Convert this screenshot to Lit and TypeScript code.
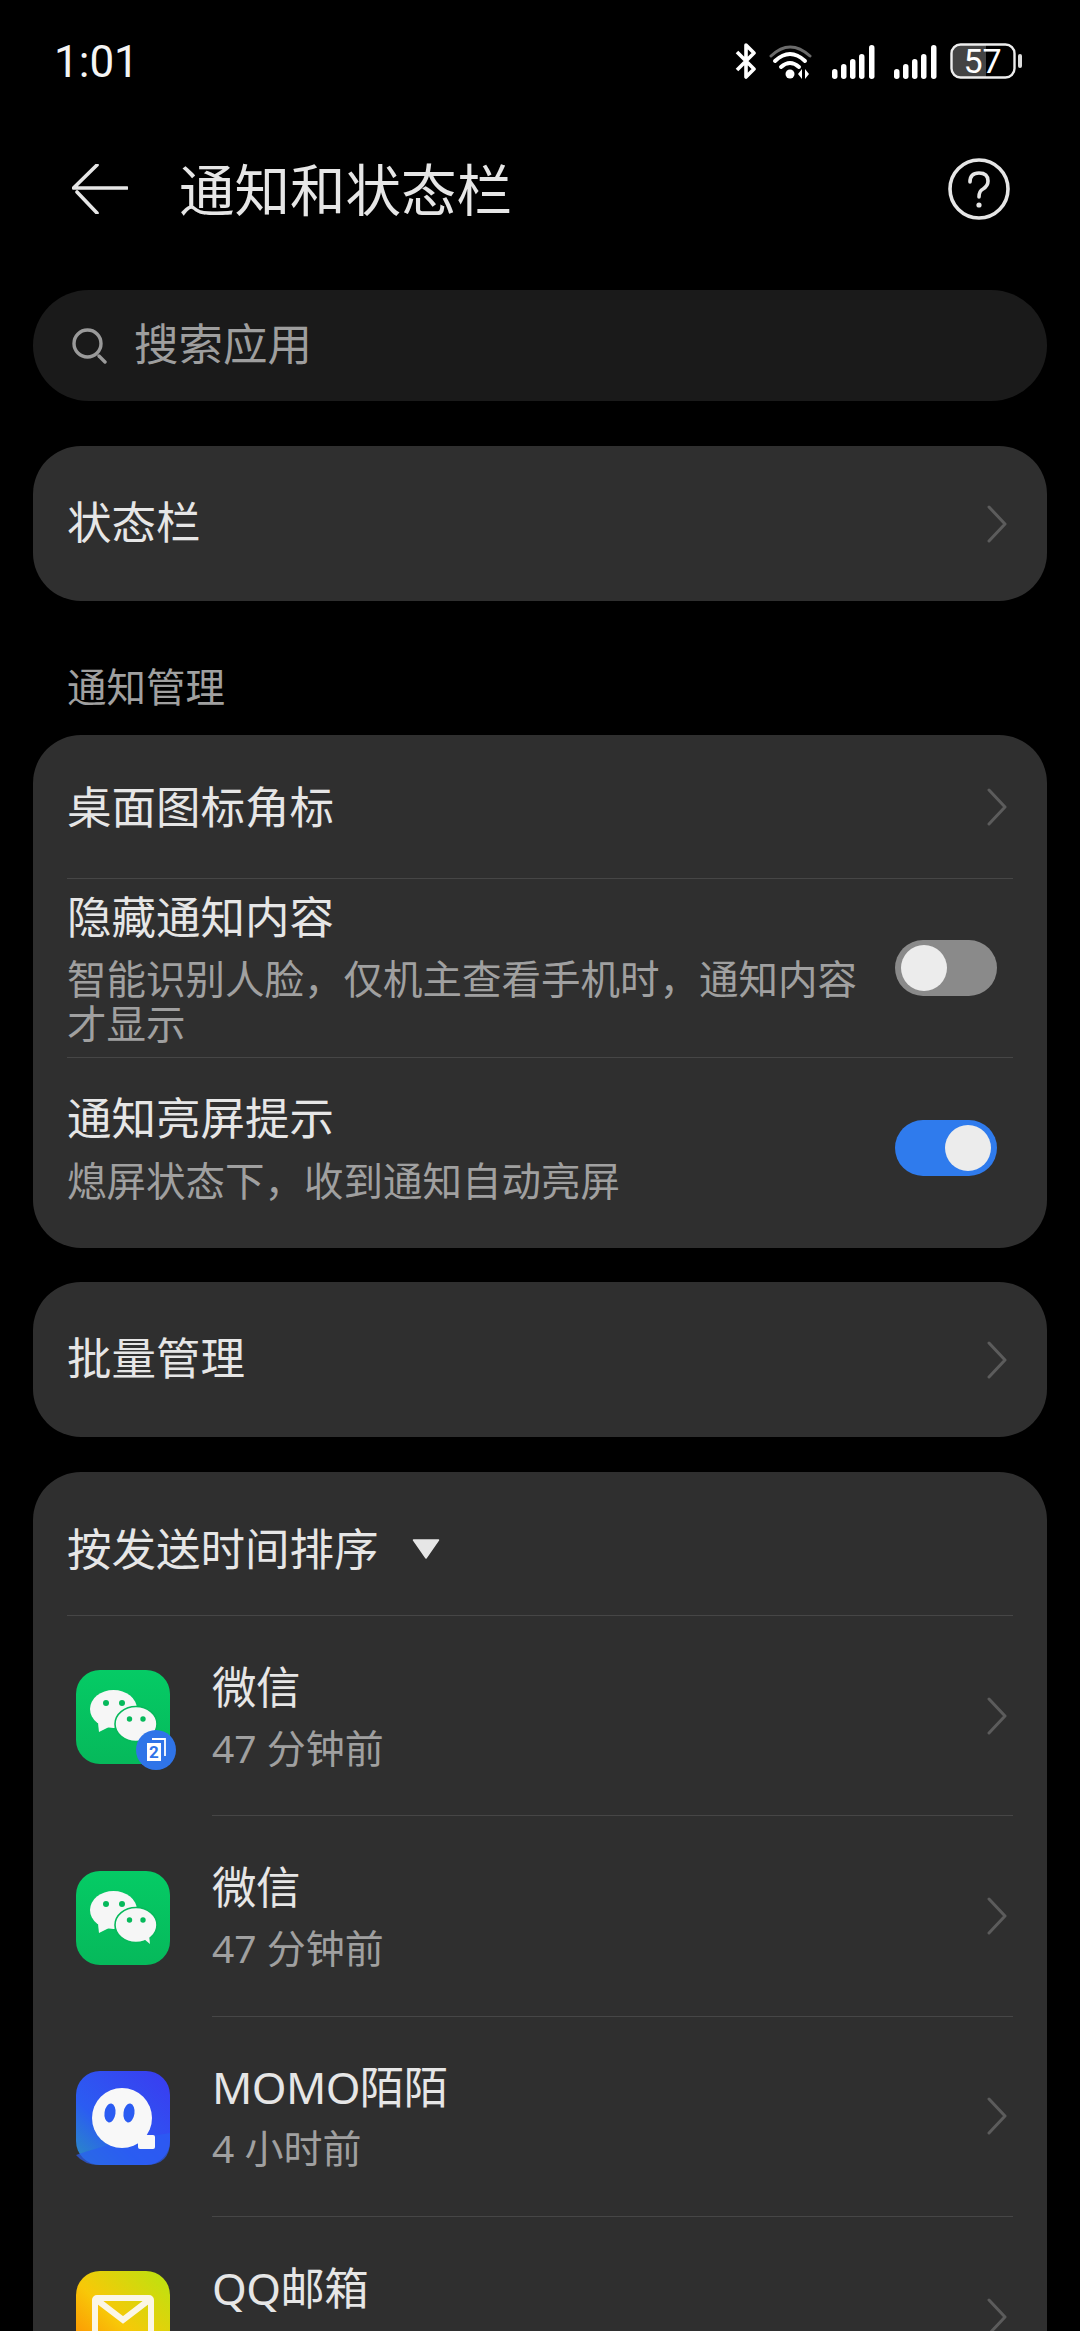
import { css, html, LitElement, svg } from "lit";
import { customElement } from "lit/decorators.js";

const chevron = html`<svg class="chevron" viewBox="0 0 20 38" aria-hidden="true">
  <path d="M2 2 L18 19 L2 36" fill="none" stroke="#5c5c5c" stroke-width="3" stroke-linecap="round" stroke-linejoin="round" />
</svg>`;

function wechatIcon(id: string, tail: boolean) {
  return html`<svg class="app-icon" viewBox="0 0 94 94" aria-hidden="true">
    <defs>
      <linearGradient id=${id} x1="0" y1="0" x2="0" y2="1">
        <stop offset="0" stop-color="#05cb65" />
        <stop offset="1" stop-color="#06b95b" />
      </linearGradient>
    </defs>
    <rect width="94" height="94" rx="24" fill="url(#${id})" />
    <ellipse cx="37.5" cy="39" rx="23.5" ry="19" fill="#f6f6f6" />
    <path d="M22 53 L23 62 L33 57 Z" fill="#f6f6f6" />
    <circle cx="30" cy="33" r="3" fill="#06b95b" />
    <circle cx="46" cy="33" r="3" fill="#06b95b" />
    <ellipse cx="60" cy="54" rx="21" ry="17.5" fill="#f6f6f6" stroke="#06b95b" stroke-width="1.6" />
    ${tail ? svg`<path d="M68 68 L74 73 L73 64 Z" fill="#f6f6f6" />` : null}
    <circle cx="53.5" cy="49" r="2.7" fill="#06b95b" />
    <circle cx="67" cy="49" r="2.7" fill="#06b95b" />
  </svg>`;
}

const momoIcon = html`<svg class="app-icon" viewBox="0 0 94 94" aria-hidden="true">
  <defs>
    <linearGradient id="momo-a" x1="0" y1="1" x2="1" y2="0">
      <stop offset="0" stop-color="#2a8fc0" />
      <stop offset="0.35" stop-color="#2b5cf2" />
      <stop offset="1" stop-color="#3a3bf0" />
    </linearGradient>
  </defs>
  <rect width="94" height="94" rx="24" fill="url(#momo-a)" />
  <path d="M0 84 Q40 70 94 62 L94 70 Q94 94 70 94 L24 94 Q8 94 0 84 Z" fill="#2b5cf2" opacity="0.7" />
  <circle cx="46" cy="47" r="30" fill="#f8f8f8" />
  <rect x="62" y="64" width="17" height="14" rx="2" fill="#f8f8f8" />
  <ellipse cx="34" cy="42" rx="5.5" ry="9.5" fill="#2b5cf2" transform="rotate(8 34 42)" />
  <ellipse cx="53" cy="42" rx="5.5" ry="9.5" fill="#2b5cf2" transform="rotate(8 53 42)" />
</svg>`;

const qqMailIcon = html`<svg class="app-icon" viewBox="0 0 94 94" aria-hidden="true">
  <defs>
    <linearGradient id="qq-a" x1="0" y1="1" x2="1" y2="0">
      <stop offset="0" stop-color="#ff7f00" />
      <stop offset="0.45" stop-color="#f8c808" />
      <stop offset="1" stop-color="#b8e410" />
    </linearGradient>
  </defs>
  <rect width="94" height="94" rx="24" fill="url(#qq-a)" />
  <rect x="19" y="27" width="56" height="46" rx="2" fill="none" stroke="#fbf6e6" stroke-width="6" />
  <path d="M21 29 L47 49 L73 29" fill="none" stroke="#fbf6e6" stroke-width="6" />
</svg>`;

const sessionBadge = html`<div class="badge">
  <svg viewBox="0 0 40 40" aria-hidden="true">
    <circle cx="20" cy="20" r="20" fill="#2f74e8" />
    <path d="M16 9 H29 V26" fill="none" stroke="#fff" stroke-width="1.8" />
    <rect x="11" y="13" width="14" height="18" fill="#fff" />
  </svg>
  <span class="badge-num">2</span>
</div>`;

const APPS = [
  { name: "微信", time: "47 分钟前", icon: html`${wechatIcon("wx-a", false)}${sessionBadge}` },
  { name: "微信", time: "47 分钟前", icon: wechatIcon("wx-b", true) },
  { name: "MOMO陌陌", time: "4 小时前", icon: momoIcon },
  // the time line of this row falls below the bottom of the screen
  { name: "QQ邮箱", time: "", icon: qqMailIcon },
];

@customElement("app-root")
export class AppRoot extends LitElement {
  static styles = css`
    :host {
      display: block;
      height: 2331px;
      overflow: hidden;
      background: #000;
      color: #e6e6e6;
      font-family: "Noto Sans", "Noto Sans CJK SC", sans-serif;
    }

    .status {
      height: 122px;
      display: flex;
      align-items: center;
      padding: 0 58px 0 54px;
    }

    .clock {
      font-family: Roboto, sans-serif;
      font-size: 44px;
      line-height: 50px;
      padding-top: 2px;
      font-weight: 400;
      color: #f4f4f4;
      flex: 1;
    }

    .status-icons {
      display: flex;
      align-items: center;
    }

    .status-icons svg {
      display: block;
      height: 36px;
    }

    .bt { width: 22px; margin-right: 12px; }
    .wifi { width: 44px; margin-right: 19px; }
    .signal { width: 43px; margin-right: 19px; }
    .signal + .signal { margin-right: 13px; }

    .battery {
      position: relative;
      width: 72px;
      height: 36px;
    }

    .battery svg { width: 72px; }

    .battery-num {
      position: absolute;
      left: 0;
      top: 0;
      width: 65px;
      text-align: center;
      font-family: Roboto, sans-serif;
      font-size: 34px;
      line-height: 36px;
      color: #fff;
    }

    .header {
      height: 134px;
      display: flex;
      align-items: center;
      padding: 0 70px 0 72px;
    }

    .back {
      width: 56px;
      height: 50px;
      margin-right: 51px;
    }

    .title {
      flex: 1;
      font-size: 55.5px;
      line-height: 70px;
      padding-bottom: 5px;
      font-weight: 400;
      font-family: "Noto Sans CJK SC", sans-serif;
    }

    .help {
      width: 62px;
      height: 62px;
    }

    .search {
      margin: 34px 33px 0;
      height: 111px;
      border-radius: 56px;
      background: #1a1a1a;
      display: flex;
      align-items: center;
      padding-left: 39px;
      color: #9e9e9e;
      font-size: 44.5px;
      line-height: 60px;
    }

    .search svg {
      width: 36px;
      height: 36px;
      margin-right: 26px;
    }

    .search span {
      padding-bottom: 3px;
    }

    .card {
      margin: 0 33px;
      background: #2f2f2f;
      border-radius: 48px;
      padding: 0 34px;
    }

    .single {
      height: 155px;
      display: flex;
      align-items: center;
      justify-content: space-between;
      font-size: 44.5px;
      line-height: 60px;
    }

    .single span {
      padding-bottom: 3px;
    }

    .card-first { margin-top: 45px; }
    .card-third { margin-top: 34px; }
    .card-apps { margin-top: 35px; }

    .chevron {
      width: 20px;
      height: 38px;
      margin-right: 6px;
      flex-shrink: 0;
    }

    .section-label {
      padding: 61px 0 23px 67px;
      font-size: 39.5px;
      line-height: 50px;
      color: #a0a0a0;
    }

    .settings {
      padding-bottom: 8px;
    }

    .setting {
      display: flex;
      align-items: center;
      justify-content: space-between;
      font-size: 44.5px;
      line-height: 60px;
    }

    .setting + .setting {
      border-top: 1px solid #464646;
    }

    .setting-nav { height: 143px; }
    .setting-hide { padding: 8px 0 10px; }
    .setting-wake { padding: 30px 0 36px; }

    .setting-text { width: 800px; }

    .hint {
      font-size: 39.5px;
      line-height: 45px;
      color: #a0a0a0;
      margin-top: 10px;
    }

    .setting-wake .hint { margin-top: 11px; }

    .toggle {
      position: relative;
      width: 102px;
      height: 56px;
      border-radius: 28px;
      background: #8a8a8a;
      margin: 2px 16px 0 0;
      flex-shrink: 0;
    }

    .setting-wake .toggle { margin-top: 4px; }

    .toggle.on { background: #2f7bed; }

    .knob {
      position: absolute;
      top: 5px;
      left: 6px;
      width: 46px;
      height: 46px;
      border-radius: 50%;
      background: #ececec;
    }

    .toggle.on .knob { left: 50px; }

    .sort {
      box-sizing: border-box;
      height: 144px;
      padding-top: 10px;
      display: flex;
      align-items: center;
      font-size: 44.5px;
      line-height: 60px;
      border-bottom: 1px solid #464646;
    }

    .sort svg {
      width: 28px;
      height: 20px;
      margin-left: 33px;
    }

    .app {
      display: flex;
      align-items: center;
      height: 200.4px;
      padding-left: 9px;
    }

    .icon-wrap {
      position: relative;
      width: 94px;
      height: 94px;
      margin-right: 42px;
      flex-shrink: 0;
      top: 1px;
    }

    .app-icon {
      display: block;
      width: 94px;
      height: 94px;
    }

    .badge {
      position: absolute;
      left: 60px;
      top: 60px;
      width: 40px;
      height: 40px;
    }

    .badge svg {
      display: block;
      width: 40px;
      height: 40px;
    }

    .badge-num {
      position: absolute;
      left: 11px;
      top: 13px;
      width: 14px;
      text-align: center;
      font-family: Roboto, sans-serif;
      font-size: 17px;
      line-height: 18px;
      font-weight: 700;
      color: #2f74e8;
    }

    .app-body {
      flex: 1;
      align-self: stretch;
      display: flex;
      align-items: center;
      justify-content: space-between;
      border-bottom: 1px solid #464646;
    }

    .app-text {
      padding-bottom: 2px;
    }

    .app-name {
      font-size: 44.5px;
      line-height: 60px;
      letter-spacing: -0.6px;
    }

    .app-time {
      font-size: 39px;
      line-height: 50px;
      height: 50px;
      margin-top: 6px;
      color: #a0a0a0;
    }
  `;

  private renderToggle(on: boolean) {
    return html`<div class="toggle ${on ? "on" : ""}"><div class="knob"></div></div>`;
  }

  private renderStatusIcons() {
    const signal = html`<svg class="signal" viewBox="0 0 43 36" aria-hidden="true">
      <g fill="#fff">
        <rect x="0" y="26" width="5.500" height="10" rx="2.700" />
        <rect x="9" y="21" width="5.500" height="15" rx="2.700" />
        <rect x="18" y="16" width="5.500" height="20" rx="2.700" />
        <rect x="27" y="11" width="5.500" height="25" rx="2.700" />
        <rect x="37" y="2" width="5.500" height="34" rx="2.700" />
      </g>
    </svg>`;
    return html`<div class="status-icons">
      <svg class="bt" viewBox="0 0 22 36" aria-hidden="true">
        <path d="M2 9 L19 26 L11 34 L11 2 L19 10 L2 27" fill="none" stroke="#fff" stroke-width="3.6" stroke-linejoin="round" />
      </svg>
      <svg class="wifi" viewBox="0 0 44 36" aria-hidden="true">
        <path d="M2 13 Q21 -5 41 13" fill="none" stroke="#6b6b6b" stroke-width="3" stroke-linecap="round" />
        <path d="M6 18 Q21 4 36 18" fill="none" stroke="#fff" stroke-width="4" stroke-linecap="round" />
        <path d="M12 24 Q21 16 30 24" fill="none" stroke="#fff" stroke-width="4" stroke-linecap="round" />
        <circle cx="21" cy="31" r="4.5" fill="#fff" />
        <path d="M33 26 L29 31 L33 36 Z M36 26 L40 31 L36 36 Z" fill="#fff" />
      </svg>
      ${signal}${signal}
      <div class="battery">
        <svg viewBox="0 0 72 36" aria-hidden="true">
          <path d="M10 1.5 H36 V34.5 H10 Q1.5 34.5 1.5 26 V10 Q1.5 1.5 10 1.5 Z" fill="#444" />
          <rect x="1.5" y="1.5" width="63" height="33" rx="9" fill="none" stroke="#eee" stroke-width="2.4" />
          <rect x="68" y="11" width="4" height="14" rx="2" fill="#ddd" />
        </svg>
        <span class="battery-num">57</span>
      </div>
    </div>`;
  }

  render() {
    return html`
      <div class="status">
        <div class="clock">1:01</div>
        ${this.renderStatusIcons()}
      </div>

      <div class="header">
        <svg class="back" viewBox="0 0 56 50" aria-hidden="true">
          <path d="M25 1 L1.500 24 H55 M5 28 L25 49" fill="none" stroke="#e6e6e6" stroke-width="3.6" stroke-linecap="round" stroke-linejoin="round" />
        </svg>
        <div class="title">通知和状态栏</div>
        <svg class="help" viewBox="0 0 62 62" aria-hidden="true">
          <circle cx="31" cy="31" r="29" fill="none" stroke="#e6e6e6" stroke-width="3.6" />
          <path d="M22 24 Q22 15 31 15 Q40 15 40 23 Q40 28 35 31 Q31 33 31 39" fill="none" stroke="#e6e6e6" stroke-width="3.6" stroke-linecap="round" />
          <circle cx="31" cy="47" r="2.6" fill="#e6e6e6" />
        </svg>
      </div>

      <div class="search">
        <svg viewBox="0 0 36 36" aria-hidden="true">
          <circle cx="15.5" cy="15.5" r="13.5" fill="none" stroke="#9a9a9a" stroke-width="3.4" />
          <path d="M27 28 L33 34" stroke="#9a9a9a" stroke-width="3.4" stroke-linecap="round" />
        </svg>
        <span>搜索应用</span>
      </div>

      <div class="card card-first single"><span>状态栏</span>${chevron}</div>

      <div class="section-label">通知管理</div>

      <div class="card settings">
        <div class="setting setting-nav">桌面图标角标${chevron}</div>
        <div class="setting setting-hide">
          <div class="setting-text">
            隐藏通知内容
            <div class="hint">智能识别人脸，仅机主查看手机时，通知内容才显示</div>
          </div>
          ${this.renderToggle(false)}
        </div>
        <div class="setting setting-wake">
          <div class="setting-text">
            通知亮屏提示
            <div class="hint">熄屏状态下，收到通知自动亮屏</div>
          </div>
          ${this.renderToggle(true)}
        </div>
      </div>

      <div class="card card-third single"><span>批量管理</span>${chevron}</div>

      <div class="card card-apps">
        <div class="sort">
          按发送时间排序
          <svg viewBox="0 0 28 20" aria-hidden="true"><path d="M1.500 1 H26.500 L14 19 Z" fill="#e6e6e6" stroke="#e6e6e6" stroke-width="1.500" stroke-linejoin="round" /></svg>
        </div>
        ${APPS.map(
          (app) => html`<div class="app">
            <div class="icon-wrap">${app.icon}</div>
            <div class="app-body">
              <div class="app-text">
                <div class="app-name">${app.name}</div>
                <div class="app-time">${app.time}</div>
              </div>
              ${chevron}
            </div>
          </div>`,
        )}
      </div>
    `;
  }
}
